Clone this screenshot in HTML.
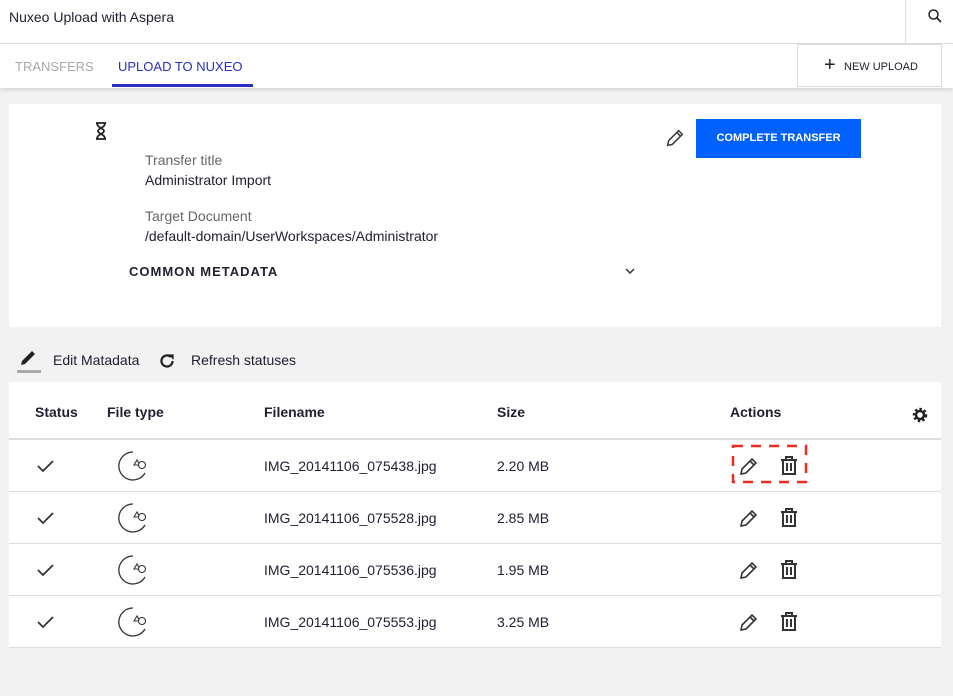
<!DOCTYPE html>
<html><head><meta charset="utf-8"><style>
*{box-sizing:border-box;margin:0;padding:0}
body{width:953px;height:696px;background:#f2f2f2;font-family:"Liberation Sans",sans-serif;color:#212032;position:relative;overflow:hidden;font-size:14px}
.abs{position:absolute}
.hdr{left:0;top:0;width:953px;height:44px;background:#fff;border-bottom:1px solid #ddd}
.tabs{left:0;top:44px;width:953px;height:44px;background:#fff;box-shadow:0 2px 4px rgba(0,0,0,.12)}
.card{background:#fff}
.row{position:absolute;left:9px;width:932px;height:52px;border-top:1px solid #ddd}
.row span{position:absolute;top:18px;font-size:14px}
</style></head><body>
<div class="abs hdr">
 <div class="abs" style="left:9px;top:9px;font-size:14px">Nuxeo Upload with Aspera</div>
 <div class="abs" style="left:905px;top:0;width:1px;height:43px;background:#ddd"></div>
 <svg class="abs" style="left:927px;top:8px" width="16" height="16" viewBox="0 0 16 16"><circle cx="6.5" cy="6.5" r="4.5" fill="none" stroke="#222" stroke-width="1.5"/><path d="M10 10l4 4" stroke="#222" stroke-width="1.8"/></svg>
</div>
<div class="abs tabs">
 <div class="abs" style="left:15px;top:15px;font-size:13px;color:#a8a8a8">TRANSFERS</div>
 <div class="abs" style="left:118px;top:15px;font-size:13px;color:#2a2fbf">UPLOAD TO NUXEO</div>
 <div class="abs" style="left:112px;top:40px;width:141px;height:3px;background:#2a2fbf"></div>
 <div class="abs" style="left:797px;top:0;width:145px;height:43px;border:1px solid #ddd;background:#fff">
  <div class="abs" style="left:26px;top:10px;font-size:20px;line-height:20px">+</div>
  <div class="abs" style="left:46px;top:16px;font-size:11px">NEW UPLOAD</div>
 </div>
</div>
<div class="abs card" style="left:9px;top:104px;width:932px;height:223px">
 <svg class="abs" style="left:85px;top:17px" width="14" height="20" viewBox="0 0 14 20"><path d="M2 2h10M2 18h10M3 2c0 5 7 5 7 8s-7 3-7 8M11 2c0 5-7 5-7 8s7 3 7 8" fill="none" stroke="#222" stroke-width="1.8"/></svg>
 <div class="abs" style="left:136px;top:48px;color:#666">Transfer title</div>
 <div class="abs" style="left:136px;top:68px">Administrator Import</div>
 <div class="abs" style="left:136px;top:104px;color:#666">Target Document</div>
 <div class="abs" style="left:136px;top:124px">/default-domain/UserWorkspaces/Administrator</div>
 <div class="abs" style="left:120px;top:160px;font-weight:bold;font-size:13px;letter-spacing:1px">COMMON METADATA</div>
 <svg class="abs" style="left:615px;top:163px" width="12" height="8"><path d="M2 2l4 4 4-4" fill="none" stroke="#333" stroke-width="1.5"/></svg>
 <svg class="abs" style="left:655px;top:22px" width="22" height="24" viewBox="0 0 24 24"><path d="M4 20l1-5L16 4l4 4L9 19z M14 6l4 4" fill="none" stroke="#333" stroke-width="1.6"/></svg>
 <div class="abs" style="left:687px;top:15px;width:165px;height:39px;background:#0061ff;color:#fff;font-weight:bold;font-size:11px;text-align:center;line-height:39px">COMPLETE TRANSFER</div>
</div>
<svg class="abs" style="left:17px;top:350px" width="24" height="18" viewBox="0 0 24 18"><path d="M4 15l1-4L15 1l3 3L8 14z" fill="#222"/></svg>
<div class="abs" style="left:17px;top:370px;width:24px;height:3px;background:#aaa"></div>
<div class="abs" style="left:53px;top:352px">Edit Matadata</div>
<svg class="abs" style="left:157px;top:351px" width="20" height="20" viewBox="0 0 18 18"><path d="M14 9a5 5 0 1 1-1.5-3.6" fill="none" stroke="#222" stroke-width="2"/><path d="M10 3h5v5z" fill="#222"/></svg>
<div class="abs" style="left:191px;top:352px">Refresh statuses</div>
<div class="abs card" style="left:9px;top:382px;width:932px;height:266px"></div>
<div class="abs" style="left:35px;top:404px;font-weight:bold">Status</div>
<div class="abs" style="left:107px;top:404px;font-weight:bold">File type</div>
<div class="abs" style="left:264px;top:404px;font-weight:bold">Filename</div>
<div class="abs" style="left:497px;top:404px;font-weight:bold">Size</div>
<div class="abs" style="left:730px;top:404px;font-weight:bold">Actions</div>
<svg class="abs" style="left:911px;top:406px" width="18" height="18" viewBox="0 0 18 18"><circle cx="9" cy="9" r="5.5" fill="none" stroke="#222" stroke-width="3.5" stroke-dasharray="2.2 2"/><circle cx="9" cy="9" r="4" fill="none" stroke="#222" stroke-width="2.5"/></svg>
<div class="abs" style="left:9px;top:438px;width:932px;height:2px;background:#ddd"></div>
<div class="row" style="top:440px;border-top:none"><span style="left:255px">IMG_20141106_075438.jpg</span><span style="left:488px">2.20 MB</span></div>
<div class="row" style="top:491px"><span style="left:255px">IMG_20141106_075528.jpg</span><span style="left:488px">2.85 MB</span></div>
<div class="row" style="top:543px"><span style="left:255px">IMG_20141106_075536.jpg</span><span style="left:488px">1.95 MB</span></div>
<div class="row" style="top:595px"><span style="left:255px">IMG_20141106_075553.jpg</span><span style="left:488px">3.25 MB</span></div>
<div class="abs" style="left:9px;top:647px;width:932px;height:1px;background:#ddd"></div>
<svg class="abs" style="left:0;top:440px" width="953" height="210">
 <defs>
  <g id="ck"><path d="M0 5l5 5 10-10" fill="none" stroke="#333" stroke-width="1.8"/></g>
  <g id="ft"><path d="M14 0A14 14 0 1 0 26 21" fill="none" stroke="#333" stroke-width="1.3"/><path d="M18 8l-3 5h6z" fill="none" stroke="#333" stroke-width="1.1"/><circle cx="23" cy="13" r="3.5" fill="#fff" stroke="#333" stroke-width="1.1"/></g>
  <g id="ac"><path d="M3 20l1-5L14 5l4 4L8 19z M12 7l4 4" fill="none" stroke="#333" stroke-width="1.6"/><g transform="translate(41,0)"><path d="M2 6h16M7 6V3h6v3M4 6v14h12V6M8 9v8M12 9v8" fill="none" stroke="#333" stroke-width="2"/></g></g>
 </defs>
 <use href="#ck" x="38" y="21"/><use href="#ck" x="38" y="73"/><use href="#ck" x="38" y="125"/><use href="#ck" x="38" y="177"/>
 <use href="#ft" x="119" y="12"/><use href="#ft" x="119" y="64"/><use href="#ft" x="119" y="116"/><use href="#ft" x="119" y="168"/>
 <use href="#ac" x="738" y="14"/><use href="#ac" x="738" y="66"/><use href="#ac" x="738" y="118"/><use href="#ac" x="738" y="170"/>
 <rect x="733" y="6" width="73" height="36" fill="none" stroke="#f02a1a" stroke-width="2.5" stroke-dasharray="10 8"/>
</svg>
</body></html>
